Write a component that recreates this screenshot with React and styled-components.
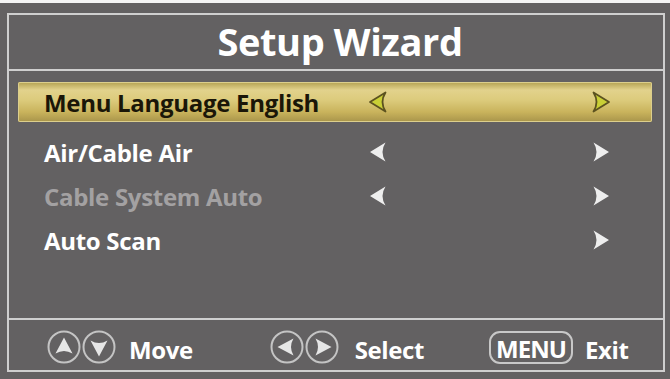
import React from 'react';
import styled, { createGlobalStyle } from 'styled-components';

const Global = createGlobalStyle`
  html, body { margin: 0; padding: 0; background: #f4f4f4; }
  body { font-family: "Open Sans", Lato, sans-serif; }
`;

const Frame = styled.div`
  margin-top: 3px;
  width: 670px;
  height: 376px;
  box-sizing: border-box;
  background: #636162;
  padding: 10px 5px 0 7px;
`;

const Panel = styled.div`
  width: 658px;
  height: 359px;
  box-sizing: border-box;
  border: 2px solid #cfcfcf;
  display: flex;
  flex-direction: column;
`;

const Title = styled.div`
  height: 56px;
  border-bottom: 2px solid #cfcfcf;
  display: flex;
  align-items: center;
  justify-content: center;
  color: #fff;
  font-size: 38px;
  font-weight: 700;
  letter-spacing: -0.4px;
  padding-left: 8px;
  padding-bottom: 2px;
  box-sizing: border-box;
`;

const Content = styled.div`
  height: 249px;
  border-bottom: 2px solid #cfcfcf;
  box-sizing: border-box;
  padding: 11px 11px 0 9px;
  display: flex;
  flex-direction: column;
`;

const Row = styled.div`
  height: ${p => p.$active ? 40 : 44}px;
  margin-bottom: ${p => p.$active ? 8 : 0}px;
  box-sizing: border-box;
  padding-left: 26px;
  display: grid;
  grid-template-columns: 324px 20px 203px 20px;
  align-items: center;
  border-radius: 2px;
  background: ${p => p.$active
    ? 'linear-gradient(180deg, #b2a050 0%, #e2d28c 20%, #dccb7c 45%, #c9b35c 75%, #a8944a 100%)'
    : 'transparent'};
  box-shadow: ${p => p.$active ? 'inset 0 0 0 1px #dccf8c' : 'none'};
`;

const Label = styled.span`
  font-size: 24px;
  font-weight: 700;
  letter-spacing: -0.3px;
  color: ${p => p.$active ? '#1a1608' : p.$disabled ? '#a3a1a2' : '#ffffff'};
`;

const Footer = styled.div`
  flex: 1;
  display: flex;
  align-items: center;
  padding: 4px 0 0 38px;
  color: #fff;
  font-size: 24px;
  font-weight: 700;
  letter-spacing: -0.4px;
`;

const Hint = styled.div`
  display: flex;
  align-items: center;
  margin-right: ${p => p.$gap}px;
`;

const HintText = styled.span`
  margin-left: ${p => p.$offset}px;
  padding-top: 4px;
`;

const Circle = styled.svg`
  width: 34px;
  height: 34px;
  display: block;
  margin-right: 1px;
`;

const MenuKey = styled.span`
  width: 84px;
  height: 33px;
  box-sizing: border-box;
  border: 2px solid #c8c8c8;
  border-radius: 11px;
  display: flex;
  align-items: center;
  justify-content: center;
  font-size: 24px;
  letter-spacing: -0.9px;
  padding-top: 3px;
`;

const Arrow = ({ dir, active }) => (
  <svg width="20" height="24" viewBox="0 0 20 24"
    style={{ transform: dir === 'right' ? 'scaleX(-1)' : 'none' }}>
    <path d="M2 12 L17.5 2.5 Q11.5 12 17.5 21.5 Z"
      fill={active ? '#c9cf36' : '#eeeeee'}
      stroke={active ? '#5c5220' : 'none'}
      strokeWidth={active ? 1.8 : 0}
      strokeLinejoin="round" />
  </svg>
);

const rotations = { up: 90, down: -90, left: 0, right: 180 };

const RoundKey = ({ dir }) => (
  <Circle viewBox="0 0 34 34">
    <circle cx="17" cy="17" r="15.5" fill="none" stroke="#c4c4c4" strokeWidth="2" />
    <g transform={`rotate(${rotations[dir]} 17 17)`}>
      <path d="M7.5 17 L23.5 8.5 Q18.5 17 23.5 25.5 Z" fill="#e6e6e6" />
    </g>
  </Circle>
);

const Spacer = () => <span />;

const rows = [
  { label: 'Menu Language English', left: true, right: true, active: true },
  { label: 'Air/Cable Air', left: true, right: true },
  { label: 'Cable System Auto', left: true, right: true, disabled: true },
  { label: 'Auto Scan', left: false, right: true },
];

export default function App() {
  return (
    <>
      <Global />
      <Frame>
        <Panel>
          <Title>Setup Wizard</Title>
          <Content>
            {rows.map(r => (
              <Row key={r.label} $active={r.active}>
                <Label $active={r.active} $disabled={r.disabled}>{r.label}</Label>
                {r.left ? <Arrow dir="left" active={r.active} /> : <Spacer />}
                <Spacer />
                {r.right ? <Arrow dir="right" active={r.active} /> : <Spacer />}
              </Row>
            ))}
          </Content>
          <Footer>
            <Hint $gap={77}>
              <RoundKey dir="up" />
              <RoundKey dir="down" />
              <HintText $offset={12}>Move</HintText>
            </Hint>
            <Hint $gap={65}>
              <RoundKey dir="left" />
              <RoundKey dir="right" />
              <HintText $offset={15}>Select</HintText>
            </Hint>
            <Hint $gap={0}>
              <MenuKey>MENU</MenuKey>
              <HintText $offset={12}>Exit</HintText>
            </Hint>
          </Footer>
        </Panel>
      </Frame>
    </>
  );
}
